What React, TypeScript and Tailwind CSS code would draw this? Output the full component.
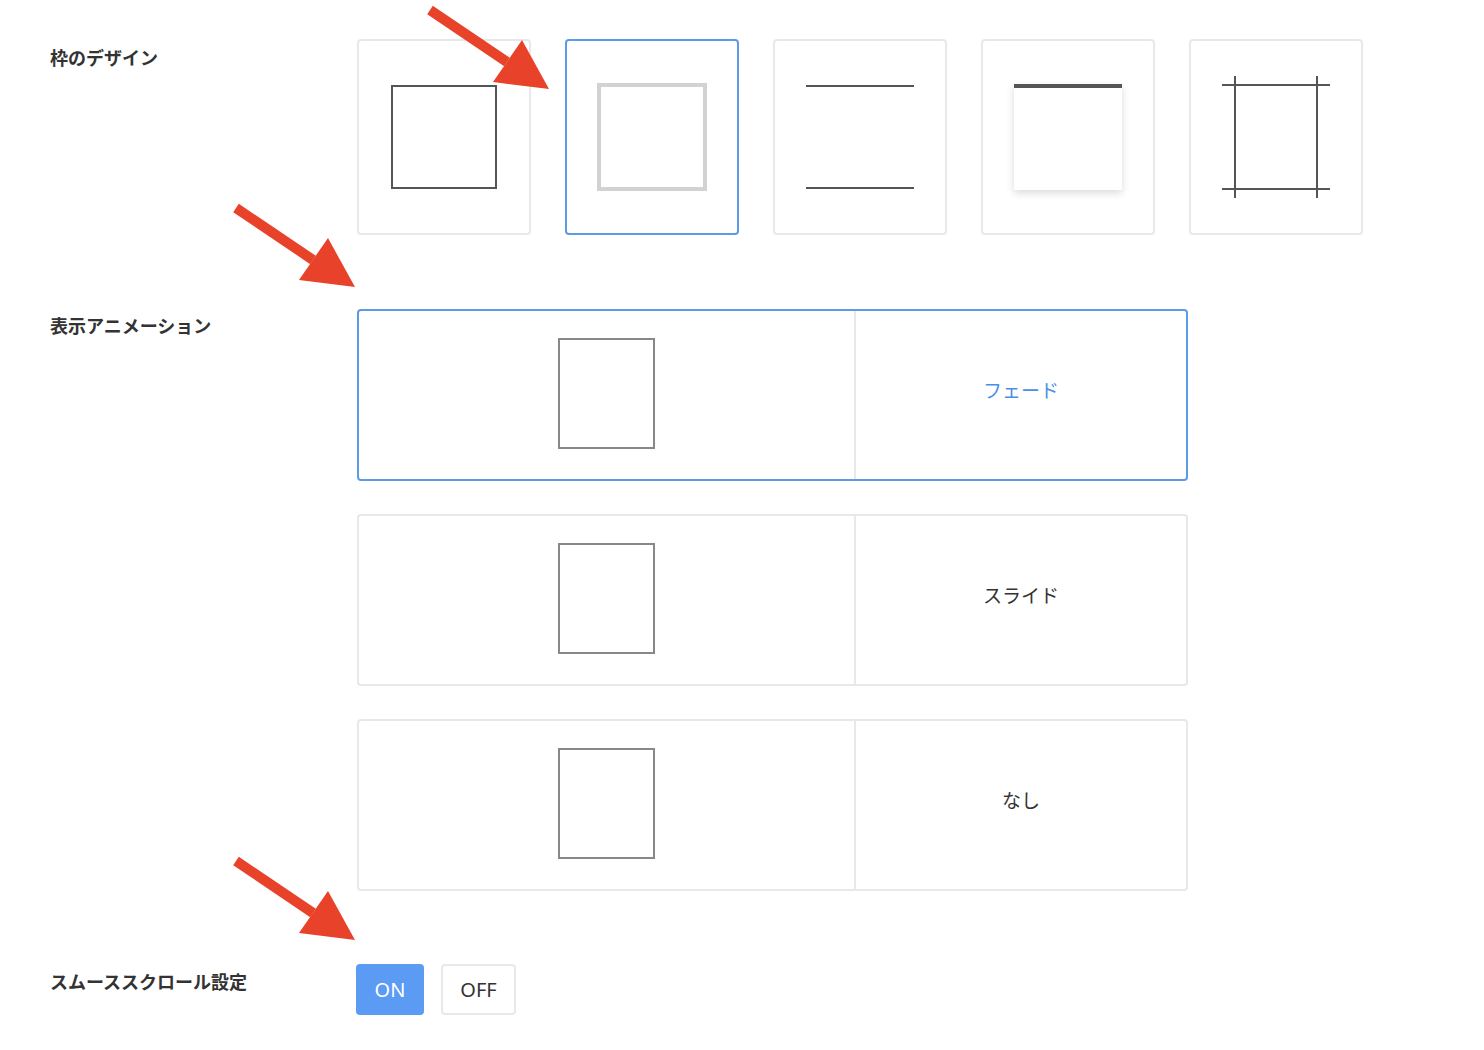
const font = "font-['Noto_Sans_CJK_JP','Noto_Sans',sans-serif]";

function Arrow({ className }: { className: string }) {
  return (
    <svg
      className={`absolute pointer-events-none ${className}`}
      width="130"
      height="92"
      viewBox="0 0 130 92"
    >
      <line x1="5" y1="6" x2="82" y2="58" stroke="#e8432a" strokeWidth="10" />
      <polygon points="124,85 68,78 97,36" fill="#e8432a" />
    </svg>
  );
}

const frames = [
  { id: "solid", selected: false },
  { id: "gray", selected: true },
  { id: "lines", selected: false },
  { id: "shadow", selected: false },
  { id: "cross", selected: false },
];

function FramePreview({ id }: { id: string }) {
  if (id === "solid") return <div className="w-[106px] h-[104px] border-2 border-[#555]" />;
  if (id === "gray") return <div className="w-[110px] h-[108px] border-4 border-[#d2d2d2]" />;
  if (id === "lines")
    return (
      <div className="w-[108px] h-[104px] flex flex-col justify-between">
        <div className="h-[2px] bg-[#555]" />
        <div className="h-[2px] bg-[#555]" />
      </div>
    );
  if (id === "shadow")
    return <div className="w-[108px] h-[106px] bg-white border-t-4 border-[#555] shadow-[0_3px_8px_rgba(0,0,0,0.15)]" />;
  return (
    <svg width="108" height="122" viewBox="0 0 108 122">
      <g stroke="#555" strokeWidth="2">
        <line x1="0" y1="9" x2="108" y2="9" />
        <line x1="0" y1="113" x2="108" y2="113" />
        <line x1="13" y1="0" x2="13" y2="122" />
        <line x1="95" y1="0" x2="95" y2="122" />
      </g>
    </svg>
  );
}

const animations = [
  { label: "フェード", selected: true },
  { label: "スライド", selected: false },
  { label: "なし", selected: false },
];

export default function App() {
  return (
    <div className={`relative min-h-[1050px] bg-white text-[#333] ${font}`}>
      <div className="pl-[50px] pt-[39px] flex flex-col">
        {/* 枠のデザイン */}
        <div className="flex">
          <div className="w-[307px] pt-[6px] text-[18px] font-bold leading-6">枠のデザイン</div>
          <div className="flex gap-[34px]">
            {frames.map((f) => (
              <div
                key={f.id}
                className={`w-[174px] h-[196px] rounded-[4px] border-2 flex items-center justify-center ${
                  f.selected ? "border-[#5b9be8]" : "border-[#e8e8e8]"
                }`}
              >
                <FramePreview id={f.id} />
              </div>
            ))}
          </div>
        </div>

        {/* 表示アニメーション */}
        <div className="flex mt-[74px]">
          <div className="w-[307px] pt-[4px] text-[18px] font-bold leading-6">表示アニメーション</div>
          <div className="flex flex-col gap-[33px]">
            {animations.map((a) => (
              <div
                key={a.label}
                className={`w-[831px] h-[172px] rounded-[4px] border-2 flex ${
                  a.selected ? "border-[#5b9be8]" : "border-[#e8e8e8]"
                }`}
              >
                <div className="w-[497px] pb-[4px] border-r-2 border-[#e8e8e8] flex items-center justify-center">
                  <div className="w-[97px] h-[111px] border-2 border-[#888]" />
                </div>
                <div
                  className={`flex-1 flex items-center justify-center text-[19px] pb-[10px] ${
                    a.selected ? "text-[#4a8fe7]" : "text-[#333]"
                  }`}
                >
                  {a.label}
                </div>
              </div>
            ))}
          </div>
        </div>

        {/* スムーススクロール設定 */}
        <div className="flex mt-[73px]">
          <div className="w-[306px] pt-[5px] text-[18px] font-bold leading-6">スムーススクロール設定</div>
          <div className="flex gap-[17px]">
            <button className="w-[68px] h-[51px] rounded-[4px] bg-[#5b9bf3] text-white text-[20px] font-['Noto_Sans',sans-serif]">
              ON
            </button>
            <button className="w-[75px] h-[51px] rounded-[4px] border-2 border-[#e8e8e8] bg-white text-[#333] text-[20px] font-['Noto_Sans',sans-serif]">
              OFF
            </button>
          </div>
        </div>
      </div>

      <Arrow className="left-[425px] top-[4px]" />
      <Arrow className="left-[231px] top-[202px]" />
      <Arrow className="left-[231px] top-[855px]" />
    </div>
  );
}
